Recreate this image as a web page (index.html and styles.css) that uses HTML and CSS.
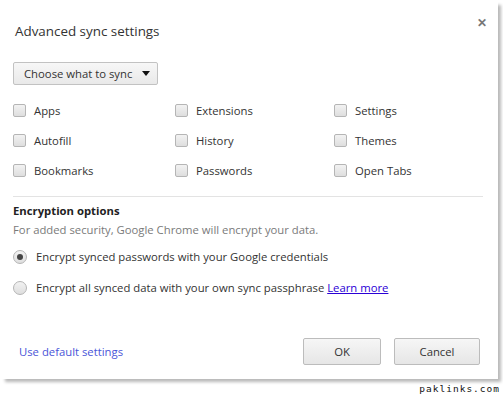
FILE: index.html
```html
<!DOCTYPE html>
<html lang="en">
<head>
	<meta charset="UTF-8">
	<title>Advanced sync settings</title>
	<link rel="stylesheet" href="styles.css">
</head>
<body>
	<div class="dialog">
		<div class="head">
			<h1 class="title">Advanced sync settings</h1>
			<span class="close">&#x2715;</span>
		</div>

		<button class="choose">Choose what to sync <i class="arrow"></i></button>

		<!-- 3 x 3 sync types -->
		<div class="types">
			<label class="item"><input type="checkbox"><span>Apps</span></label>
			<label class="item"><input type="checkbox"><span>Extensions</span></label>
			<label class="item"><input type="checkbox"><span>Settings</span></label>
			<label class="item"><input type="checkbox"><span>Autofill</span></label>
			<label class="item"><input type="checkbox"><span>History</span></label>
			<label class="item"><input type="checkbox"><span>Themes</span></label>
			<label class="item"><input type="checkbox"><span>Bookmarks</span></label>
			<label class="item"><input type="checkbox"><span>Passwords</span></label>
			<label class="item"><input type="checkbox"><span>Open Tabs</span></label>
		</div>

		<div class="encrypt">
			<h2 class="sub">Encryption options</h2>
			<p class="note">For added security, Google Chrome will encrypt your data.</p>
			<label class="opt"><input type="radio" name="enc" checked><span>Encrypt synced passwords with your Google credentials</span></label>
			<label class="opt"><input type="radio" name="enc"><span>Encrypt all synced data with your own sync passphrase <a href="#" class="learn">Learn more</a></span></label>
		</div>

		<div class="foot">
			<a href="#" class="reset">Use default settings</a>
			<div class="btns">
				<button class="btn ok">OK</button>
				<button class="btn">Cancel</button>
			</div>
		</div>
	</div>
	<div class="mark">paklinks.com</div>
</body>
</html>
```

FILE: styles.css
```css
body {
	margin: 0;
	background: #fff;
	font-family: "Open Sans", "Noto Sans", sans-serif;
	font-size: 11.3px;
	color: #333;
}

.dialog {
	width: 498px;
	height: 379px;
	box-sizing: border-box;
	padding: 0 15px 0 13px;
	background: #fff;
	box-shadow: 4px 4px 3px -1px rgba(0, 0, 0, .28);
	display: flex;
	flex-direction: column;
}

/* title bar */
.head {
	height: 52px;
	display: flex;
	align-items: center;
	justify-content: space-between;
	padding-top: 10px;
	box-sizing: border-box;
}
.title {
	margin: 0 0 0 2px;
	font-size: 13.4px;
	font-weight: normal;
	color: #333;
}
.close {
	font-size: 12px;
	font-weight: bold;
	color: #777;
	margin: -17px -4px 0 0;
}

/* dropdown */
.choose {
	align-self: flex-start;
	width: 145px;
	height: 23px;
	margin-top: 10px;
	padding: 0 0 0 10px;
	font: inherit;
	color: #333;
	white-space: nowrap;
	border: 1px solid #c2c2c2;
	border-radius: 2px;
	background: linear-gradient(#f7f7f7, #e9e9e9);
	display: flex;
	align-items: center;
	gap: 10px;
}
.arrow {
	width: 0;
	height: 0;
	border-left: 4px solid transparent;
	border-right: 4px solid transparent;
	border-top: 5px solid #111;
}

/* sync types grid */
.types {
	margin-top: 10px;
	display: grid;
	grid-template-columns: 162px 159px auto;
	grid-auto-rows: 30px;
}
.item {
	display: flex;
	align-items: center;
	gap: 8px;
}
input[type="checkbox"],
input[type="radio"] {
	appearance: none;
	margin: 0;
	width: 13px;
	height: 13px;
	border: 1px solid #b5b5b5;
	border-radius: 2px;
	background: linear-gradient(#f2f2f2, #dedede);
	flex: none;
}
input[type="radio"] {
	width: 14px;
	height: 14px;
	border-radius: 50%;
	display: grid;
	place-items: center;
}
input[type="radio"]:checked::after {
	content: '';
	width: 6px;
	height: 6px;
	border-radius: 50%;
	background: #444;
}

/* encryption block */
.encrypt {
	margin-top: 11px;
	border-top: 1px solid #e3e3e3;
}
.sub {
	margin: 6px 0 0 0;
	font-size: 11.3px;
	font-weight: bold;
	color: #222;
	line-height: 16px;
}
.note {
	margin: 3px 0 0 0;
	line-height: 16px;
	color: #7a7a7a;
}
.opt {
	display: flex;
	align-items: center;
	gap: 9px;
	height: 31px;
}
.opt:first-of-type {
	margin-top: 3px;
}
.learn {
	color: #2a00d6;
}

/* footer */
.foot {
	margin-top: auto;
	margin-bottom: 14px;
	display: flex;
	align-items: center;
	justify-content: space-between;
	padding-left: 6px;
}
.reset {
	color: #4a55d8;
	text-decoration: none;
}
.btns {
	display: flex;
	gap: 13px;
	margin-right: 3px;
}
.btn {
	width: 78px;
	height: 27px;
	font: inherit;
	color: #333;
	border: 1px solid #bcbcbc;
	border-radius: 2px;
	background: linear-gradient(#f6f6f6, #e6e6e6);
}
.btn:last-child {
	width: 86px;
}

.mark {
	width: 500px;
	text-align: right;
	margin-top: 4px;
	font-family: "DejaVu Sans Mono", monospace;
	font-size: 9.5px;
	letter-spacing: 1px;
	color: #111;
}
```
